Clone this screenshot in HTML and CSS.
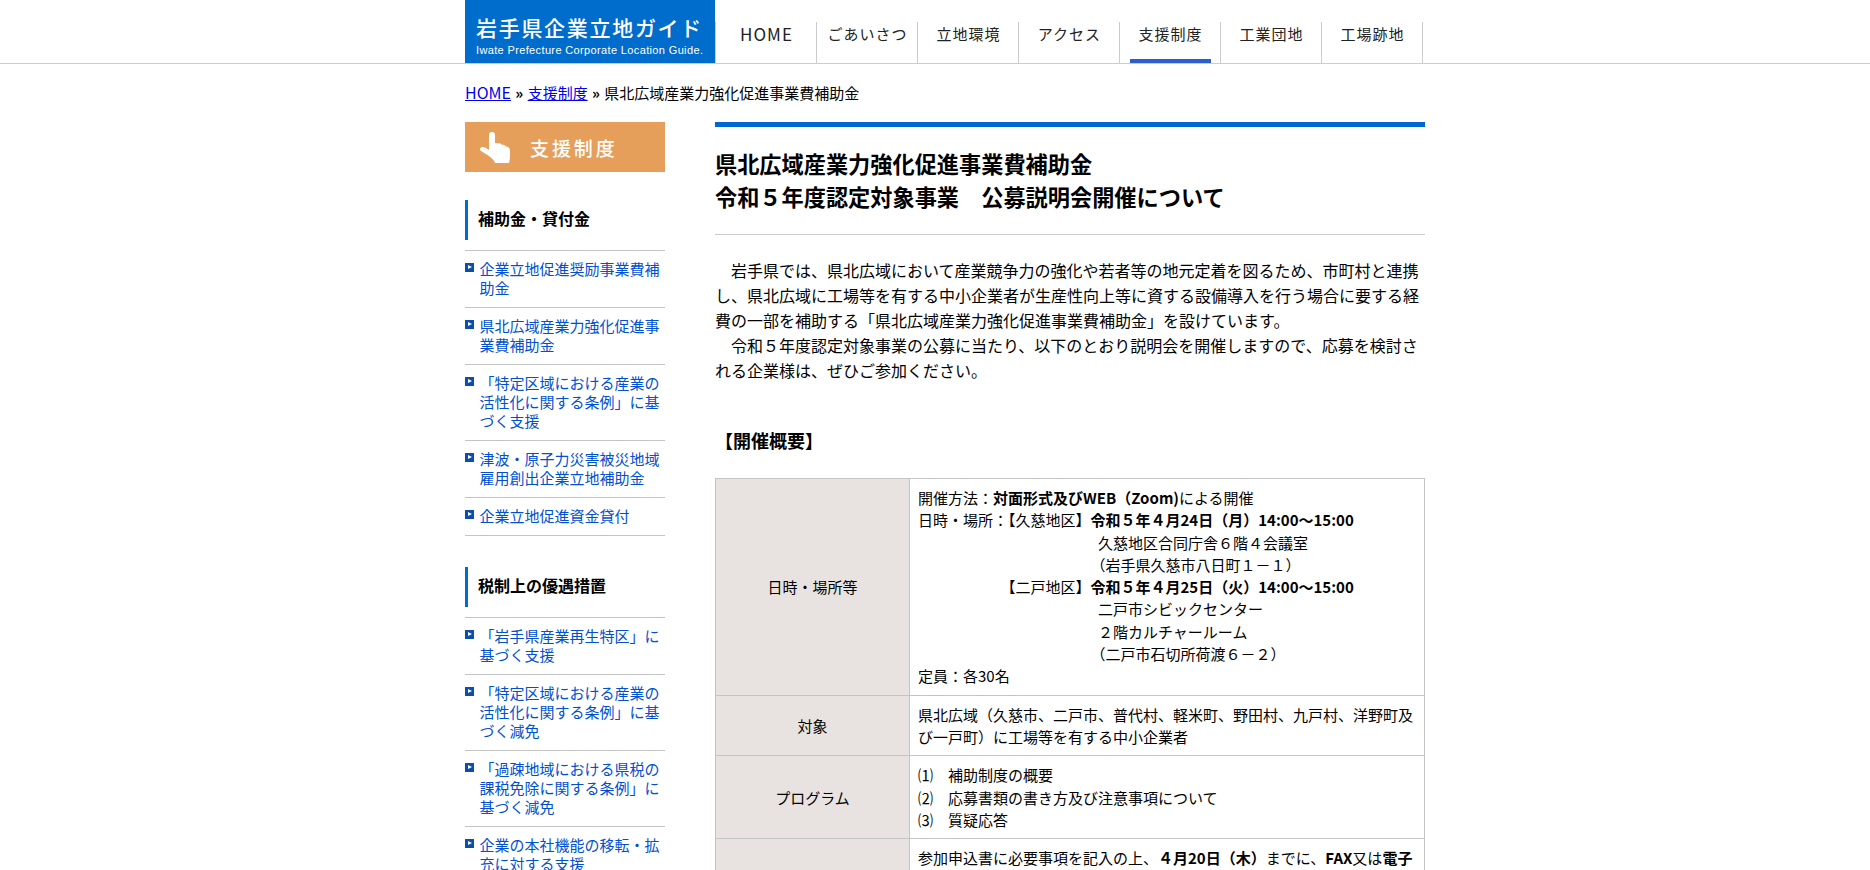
FILE: index.html
```html
<!DOCTYPE html>
<html lang="ja">

<head>
    <meta charset="UTF-8">
    <meta name="viewport" content="width=device-width, initial-scale=1.0">
    <title>県北広域産業力強化促進事業費補助金 | 岩手県企業立地ガイド</title>
    <link rel="stylesheet" href="styles.css">
</head>

<body>
    <header class="site-head">
        <div class="head-in">
            <a class="logo" href="#">
                <span class="logo-ja">岩手県企業立地ガイド</span>
                <span class="logo-en">Iwate Prefecture Corporate Location Guide.</span>
            </a>
            <ul class="gnav">
                <li><a class="home" href="#">HOME</a></li>
                <li><a href="#">ごあいさつ</a></li>
                <li><a href="#">立地環境</a></li>
                <li><a href="#">アクセス</a></li>
                <li class="on"><a href="#">支援制度</a></li>
                <li><a href="#">工業団地</a></li>
                <li><a href="#">工場跡地</a></li>
            </ul>
        </div>
    </header>

    <div class="wrap">
        <p class="crumb"><a class="crumb-home" href="#">HOME</a> <b>»</b> <a href="#">支援制度</a> <b>»</b> 県北広域産業力強化促進事業費補助金</p>

        <div class="cols">
            <aside class="side">
                <div class="side-title">
                    <svg class="hand" viewBox="0 0 30 31" width="30" height="31">
                        <path fill="#fff" d="M9 3C9 1 10 0 12 0S15 1 15 3V11L18 11.500C19.500 11 21 11.500 22 13C23.500 12.500 25 13 26 14.500C28.500 14.500 30 16 30 19V25C30 27 29.500 28.500 29 31H15C14 28 12 26.500 9 24L1 19C-.5 18 -.2 15.500 2 15C4 14.500 7 16.500 9 18Z" />
                    </svg>
                    <span>支援制度</span>
                </div>

                <h3 class="side-head">補助金・貸付金</h3>
                <ul class="side-list">
                    <li><a href="#">企業立地促進奨励事業費補助金</a></li>
                    <li><a href="#">県北広域産業力強化促進事業費補助金</a></li>
                    <li><a href="#">「特定区域における産業の活性化に関する条例」に基づく支援</a></li>
                    <li><a href="#">津波・原子力災害被災地域雇用創出企業立地補助金</a></li>
                    <li><a href="#">企業立地促進資金貸付</a></li>
                </ul>

                <h3 class="side-head">税制上の優遇措置</h3>
                <ul class="side-list">
                    <li><a href="#">「岩手県産業再生特区」に基づく支援</a></li>
                    <li><a href="#">「特定区域における産業の活性化に関する条例」に基づく減免</a></li>
                    <li><a href="#">「過疎地域における県税の課税免除に関する条例」に基づく減免</a></li>
                    <li><a href="#">企業の本社機能の移転・拡充に対する支援</a></li>
                </ul>
            </aside>

            <main class="main">
                <h1 class="page-title">県北広域産業力強化促進事業費補助金<br>令和５年度認定対象事業　公募説明会開催について</h1>

                <p class="lead">　岩手県では、県北広域において産業競争力の強化や若者等の地元定着を図るため、市町村と連携し、県北広域に工場等を有する中小企業者が生産性向上等に資する設備導入を行う場合に要する経費の一部を補助する「県北広域産業力強化促進事業費補助金」を設けています。<br>　令和５年度認定対象事業の公募に当たり、以下のとおり説明会を開催しますので、応募を検討される企業様は、ぜひご参加ください。</p>

                <h2 class="sub-head">【開催概要】</h2>

                <table class="info">
                    <tr>
                        <th>日時・場所等</th>
                        <td>開催方法：<b>対面形式及びWEB（Zoom)</b>による開催<br>
                            日時・場所：【久慈地区】<b>令和５年４月24日（月）14:00～15:00</b><br>
                            　　　　　　　　　　　　久慈地区合同庁舎６階４会議室<br>
                            　　　　　　　　　　　　（岩手県久慈市八日町１－１）<br>
                            　　　　　　【二戸地区】<b>令和５年４月25日（火）14:00～15:00</b><br>
                            　　　　　　　　　　　　二戸市シビックセンター<br>
                            　　　　　　　　　　　　２階カルチャールーム<br>
                            　　　　　　　　　　　　（二戸市石切所荷渡６－２）<br>
                            定員：各30名</td>
                    </tr>
                    <tr>
                        <th>対象</th>
                        <td>県北広域（久慈市、二戸市、普代村、軽米町、野田村、九戸村、洋野町及び一戸町）に工場等を有する中小企業者</td>
                    </tr>
                    <tr>
                        <th>プログラム</th>
                        <td>⑴　補助制度の概要<br>⑵　応募書類の書き方及び注意事項について<br>⑶　質疑応答</td>
                    </tr>
                    <tr>
                        <th></th>
                        <td>参加申込書に必要事項を記入の上、<b>４月20日（木）</b>までに、<b>FAX</b>又は<b>電子</b></td>
                    </tr>
                </table>
            </main>
        </div>
    </div>
</body>

</html>
```

FILE: styles.css
```css
* {
    box-sizing: border-box;
}

body {
    margin: 0;
    color: #000;
    font-family: "Noto Sans CJK JP", sans-serif;
    font-size: 15px;
    background: #fff;
}

ul {
    margin: 0;
    padding: 0;
    list-style: none;
}

.site-head {
    height: 64px;
    border-bottom: 1px solid #ccc;
}

.head-in {
    display: flex;
    width: 980px;
    height: 63px;
    margin: 0 auto;
    padding-left: 20px;
}

.logo {
    display: flex;
    flex-direction: column;
    width: 250px;
    padding: 13px 0 0 11px;
    overflow: hidden;
    color: #fff;
    text-decoration: none;
    background: #006ccc;
}

.logo-ja {
    font-size: 21px;
    font-weight: 500;
    line-height: 28px;
    letter-spacing: 1.7px;
    white-space: nowrap;
}

.logo-en {
    margin-top: 2px;
    font-family: "Liberation Sans", sans-serif;
    font-size: 11px;
    line-height: 14px;
    letter-spacing: 0.36px;
    white-space: nowrap;
}

.gnav {
    display: flex;
    align-self: flex-end;
    height: 41px;
    border-left: 1px solid #ccc;
}

.gnav li {
    width: 101px;
    padding: 0 9px 0 10px;
    border-right: 1px solid #ccc;
}

.gnav a {
    display: block;
    height: 41px;
    padding-top: 1px;
    border-bottom: 4px solid transparent;
    color: #222;
    font-size: 15px;
    line-height: 22px;
    letter-spacing: 1px;
    text-align: center;
    text-decoration: none;
    white-space: nowrap;
}

.gnav .home {
    font-size: 17px;
}

.gnav li.on a {
    border-bottom-color: #2b5fd0;
}

.wrap {
    width: 980px;
    margin: 0 auto;
    padding-left: 20px;
}

.crumb {
    margin: 0;
    padding-top: 18px;
    line-height: 22px;
    word-spacing: 1px;
}

.crumb a {
    color: #0000ee;
}

.crumb-home {
    font-size: 16px;
    line-height: 1;
}

.cols {
    display: flex;
    gap: 50px;
    margin-top: 18px;
}

.side {
    flex: none;
    width: 200px;
}

.side-title {
    display: flex;
    align-items: center;
    height: 50px;
    margin-bottom: 28px;
    padding-left: 15px;
    color: #fff;
    background: #e59f5b;
}

.side-title span {
    margin-left: 20px;
    font-size: 19px;
    font-weight: 500;
    letter-spacing: 2.9px;
}

.side-head {
    height: 40px;
    margin: 0 0 10px;
    padding-left: 10px;
    border-left: 3px solid #006ccc;
    font-size: 16px;
    line-height: 36px;
}

.side-list {
    margin-bottom: 31px;
    border-top: 1px solid #c4c4c4;
}

.side-list li {
    position: relative;
    padding: 8px 0 10px 14.5px;
    border-bottom: 1px solid #c4c4c4;
    line-height: 19px;
}

.side-list li::before {
    content: "";
    position: absolute;
    top: 12px;
    left: 0;
    width: 9px;
    height: 9px;
    background: #0a50aa;
}

.side-list li::after {
    content: "";
    position: absolute;
    top: 14px;
    left: 3px;
    border: 2.5px solid transparent;
    border-left: 4px solid #fff;
}

.side-list a {
    color: #0050d0;
    text-decoration: none;
}

.main {
    flex: none;
    width: 710px;
}

.page-title {
    margin: 0;
    padding: 20px 0 21px;
    border-top: 5px solid #0066d0;
    border-bottom: 1px solid #ccc;
    font-size: 22.2px;
    line-height: 33px;
}

.lead {
    margin: 23px 0 0;
    font-size: 16px;
    line-height: 25px;
}

.sub-head {
    margin: 45px 0 0;
    font-size: 18px;
    line-height: 25px;
}

.info {
    width: 100%;
    margin-top: 25px;
    border-collapse: collapse;
}

.info th,
.info td {
    padding: 8px 8px 7px;
    border: 1px solid #c4c4c4;
    line-height: 22.3px;
}

.info th {
    width: 194px;
    font-weight: normal;
    background: #e8e3e0;
}
```
